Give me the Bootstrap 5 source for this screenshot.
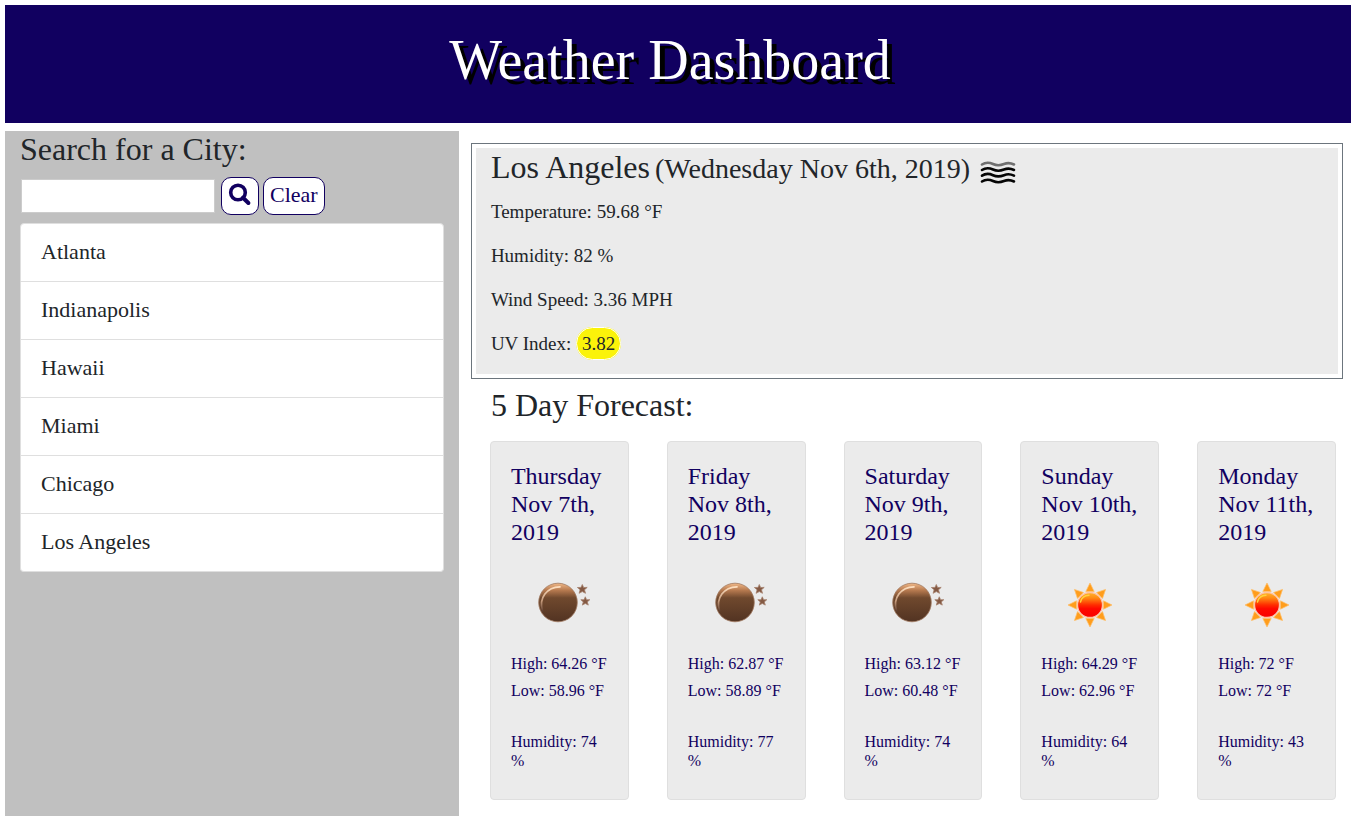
<!DOCTYPE html>
<html lang="en">
<head>
<meta charset="utf-8">
<meta name="viewport" content="width=device-width, initial-scale=1">
<title>Weather Dashboard</title>
<link rel="stylesheet" href="https://cdn.jsdelivr.net/npm/bootstrap@5.3.0/dist/css/bootstrap.min.css">
<style>
  :root { --navy: #110060; --panel: #ebebeb; }
  body { font-family: "Liberation Serif", "Times New Roman", serif; color: #212529; padding: 5px 8px 12px 5px; min-height: 100vh; }
  h1, h2, h3 { font-weight: 400; }
  .masthead { background: var(--navy); padding: 22px 16px 30px 0; }
  .masthead h1 { font-size: 56px; line-height: 66px; text-shadow: 5px 5px #000; }
  .sidebar { flex: 0 0 100%; background: silver; padding: 0 15px; }
  .content-area { padding: 12px 8px 16px 12px; }
  .section-title { font-size: 32px; line-height: 36px; padding-bottom: 2px; }
  .city-input { width: 194px; height: 34px; border: 1px solid #ccc; background: #fff; font-size: 22px; padding: 1px 4px; margin: 0 2px 0 1px; }
  .tool-btn { height: 38px; border: 1px solid var(--navy); border-radius: 10px; background: #fff; color: var(--navy); font-size: 22px; line-height: 32px; padding: 0 6px 2px; }
  .city-list { --bs-list-group-border-color: #dfdfdf; --bs-list-group-border-radius: 4px; --bs-list-group-color: #212529; }
  .city-list .list-group-item { font-size: 22px; line-height: 33px; padding: 11px 20px 13px; }
  .current { border: 1px solid #6c757d; padding: 4px; }
  .current-body { background: var(--panel); padding: 0 15px 16px; font-size: 19px; line-height: 28px; }
  .current-title { column-gap: 5px; font-size: 32px; line-height: 38px; padding-bottom: 2px; }
  .current-title .date { font-size: 28px; }
  .uv { background: #fbf30a; border: 1px solid #fff; border-radius: 17px; padding: 5px; }
  .forecast { display: grid; grid-template-columns: repeat(auto-fit, minmax(136px, 1fr)); gap: 38px; padding: 0 7px 0 19px; }
  .day { --bs-card-bg: var(--panel); --bs-card-border-color: #dfdfdf; --bs-card-border-radius: 4px; color: var(--navy); font-size: 16px; line-height: 19px; }
  .day .card-body { padding: 20px 20px 29px; }
  .day h3 { font-size: 24px; line-height: 28px; margin-bottom: 34px; }
  .day svg { margin: 0 auto 24px; }
  .day .temp { margin-bottom: 8px; }
  .day .humidity { margin: 32px 0 0; }
  @media (min-width: 992px) {
    .sidebar { flex-basis: 33.4vw; }
  }
</style>
</head>
<body class="d-flex flex-column">
<svg width="0" height="0" class="position-absolute" aria-hidden="true">
  <defs>
    <linearGradient id="moonFill" x1="0" y1="0" x2="0" y2="1">
      <stop offset="0" stop-color="#f0b888"/><stop offset=".18" stop-color="#b87b50"/><stop offset=".38" stop-color="#70492e"/><stop offset="1" stop-color="#523322"/>
    </linearGradient>
    <linearGradient id="moonRim" x1="0" y1="0" x2="0" y2="1">
      <stop offset="0" stop-color="#ffe0c0"/><stop offset=".6" stop-color="#c59a7c"/><stop offset="1" stop-color="#604030"/>
    </linearGradient>
    <linearGradient id="sunFill" x1="0" y1="0" x2="0" y2="1">
      <stop offset="0" stop-color="#ffb52e"/><stop offset=".22" stop-color="#ff8a14"/><stop offset=".5" stop-color="#ff2c00"/><stop offset=".65" stop-color="#ff0800"/><stop offset="1" stop-color="#f80000"/>
    </linearGradient>
    <symbol id="moon" viewBox="0 0 64 50">
      <circle cx="31" cy="22.5" r="19.3" fill="url(#moonFill)" stroke="#a0785f" stroke-width=".8"/>
      <path d="M15.500 31C11.500 18 20 7 33 6.800" fill="none" stroke="url(#moonRim)" stroke-width="1.700" stroke-linecap="round"/>
      <path d="M55.300 4.500l1.300 3 3.600-.1-2.700 2.400 1 3.500-3.200-1.700-3.200 1.700 1-3.500-2.700-2.300 3.600-.1z" fill="#845943" stroke="#a5806c" stroke-width=".8"/>
      <path d="M58.300 16.800l1.300 3 3.200-.1-2.500 2.200 1 3.200-3-1.600-3 1.600 1-3.200-2.500-2.200 3.200.1z" fill="#845943" stroke="#a5806c" stroke-width=".8"/>
    </symbol>
    <symbol id="sun" viewBox="0 0 64 50">
      <g fill="#ff9d1c" stroke="#ffbe68" stroke-width=".7">
        <path id="ray" d="M27.800 11.500L32 3l4.200 8.500z"/>
        <use href="#ray" transform="rotate(45 32 25)"/><use href="#ray" transform="rotate(90 32 25)"/><use href="#ray" transform="rotate(135 32 25)"/><use href="#ray" transform="rotate(180 32 25)"/><use href="#ray" transform="rotate(225 32 25)"/><use href="#ray" transform="rotate(270 32 25)"/><use href="#ray" transform="rotate(315 32 25)"/>
      </g>
      <circle cx="32" cy="25" r="12.500" fill="url(#sunFill)" stroke="#ffc4a4" stroke-width="1.300"/>
      <path d="M22.500 22C23.500 17.500 27 15.300 31 15.200" fill="none" stroke="#ffd23c" stroke-width="1.400" stroke-linecap="round"/>
    </symbol>
  </defs>
</svg>

<header class="masthead text-center text-white mb-2">
  <h1 class="mb-0">Weather Dashboard</h1>
</header>

<div class="d-flex flex-wrap flex-lg-nowrap flex-grow-1">
  <aside class="sidebar">
    <h2 class="section-title mb-2"><label class="d-block" for="city">Search for a City:</label></h2>
    <form class="d-flex align-items-center gap-1 mb-2" onsubmit="return false">
      <input class="city-input" id="city" type="text" autocomplete="off">
      <button class="tool-btn" type="submit" aria-label="Search">
        <svg class="d-block" width="24" height="24" viewBox="0 0 24 24" fill="none" stroke="currentColor" aria-hidden="true"><circle cx="10" cy="9.500" r="7.300" stroke-width="3.600"/><path d="M15 14.700l5.400 5.300" stroke-width="4" stroke-linecap="round"/></svg>
      </button>
      <button class="tool-btn" type="button">Clear</button>
    </form>
    <ul class="list-group city-list">
      <li class="list-group-item">Atlanta</li>
      <li class="list-group-item">Indianapolis</li>
      <li class="list-group-item">Hawaii</li>
      <li class="list-group-item">Miami</li>
      <li class="list-group-item">Chicago</li>
      <li class="list-group-item">Los Angeles</li>
    </ul>
  </aside>

  <main class="content-area flex-grow-1">
    <section class="current mb-2">
      <div class="current-body">
        <h2 class="current-title d-flex flex-wrap align-items-baseline mb-2">
          <span>Los Angeles</span>
          <span class="date">(Wednesday Nov 6th, 2019)</span>
          <svg class="align-self-end" width="42" height="27" viewBox="-2 0 42 27" fill="none" stroke="#050505" stroke-width="2.600" stroke-linecap="round" role="img" aria-label="Mist">
            <path d="M5 3.500C9 .8 13 1.600 16 3s7 1.600 11 0 7-1 10 .5" stroke="#707070"/>
            <path d="M5 9C9 6.300 13 7.100 16 8.500s7 1.600 11 0 7-1 10 .5M5 14.700C9 12 13 12.800 16 14.200s7 1.600 11 0 7-1 10 .5M5 20.500C9 17.800 13 18.600 16 20s7 1.600 11 0 7-1 10 .5"/>
          </svg>
        </h2>
        <p>Temperature: 59.68 °F</p>
        <p>Humidity: 82 %</p>
        <p>Wind Speed: 3.36 MPH</p>
        <p class="mb-0">UV Index: <span class="uv">3.82</span></p>
      </div>
    </section>

    <h2 class="section-title mb-3 ms-3 ps-1">5 Day Forecast:</h2>
    <section class="forecast">
      <article class="card day"><div class="card-body">
        <h3>Thursday Nov 7th, 2019</h3>
        <svg class="d-block" width="64" height="50" role="img" aria-label="Clear night"><use href="#moon"/></svg>
        <p class="temp">High: 64.26 °F</p><p class="temp">Low: 58.96 °F</p>
        <p class="humidity">Humidity: 74 %</p>
      </div></article>
      <article class="card day"><div class="card-body">
        <h3>Friday<br>Nov 8th, 2019</h3>
        <svg class="d-block" width="64" height="50" role="img" aria-label="Clear night"><use href="#moon"/></svg>
        <p class="temp">High: 62.87 °F</p><p class="temp">Low: 58.89 °F</p>
        <p class="humidity">Humidity: 77 %</p>
      </div></article>
      <article class="card day"><div class="card-body">
        <h3>Saturday Nov 9th, 2019</h3>
        <svg class="d-block" width="64" height="50" role="img" aria-label="Clear night"><use href="#moon"/></svg>
        <p class="temp">High: 63.12 °F</p><p class="temp">Low: 60.48 °F</p>
        <p class="humidity">Humidity: 74 %</p>
      </div></article>
      <article class="card day"><div class="card-body">
        <h3>Sunday<br>Nov 10th, 2019</h3>
        <svg class="d-block" width="64" height="50" role="img" aria-label="Sunny"><use href="#sun"/></svg>
        <p class="temp">High: 64.29 °F</p><p class="temp">Low: 62.96 °F</p>
        <p class="humidity">Humidity: 64 %</p>
      </div></article>
      <article class="card day"><div class="card-body">
        <h3>Monday<br>Nov 11th, 2019</h3>
        <svg class="d-block" width="64" height="50" role="img" aria-label="Sunny"><use href="#sun"/></svg>
        <p class="temp">High: 72 °F</p><p class="temp">Low: 72 °F</p>
        <p class="humidity">Humidity: 43 %</p>
      </div></article>
    </section>
  </main>
</div>
<script src="https://cdn.jsdelivr.net/npm/bootstrap@5.3.0/dist/js/bootstrap.bundle.min.js"></script>
</body>
</html>
